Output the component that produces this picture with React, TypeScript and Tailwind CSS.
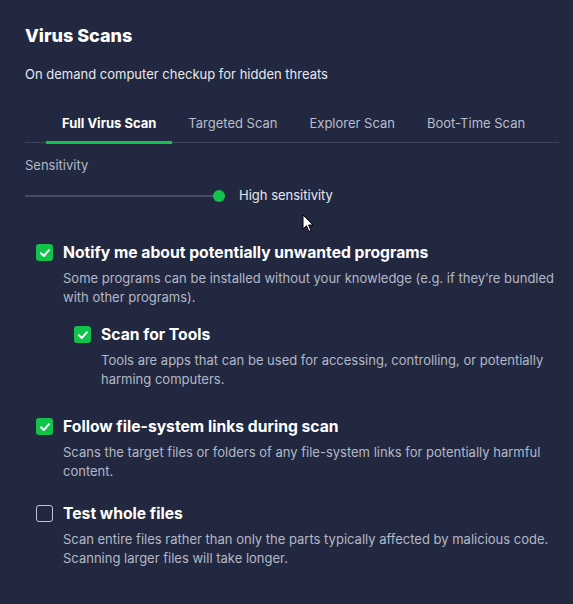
import React from "react";

const Check = ({ checked }: { checked: boolean }) =>
  checked ? (
    <div className="w-[17px] h-[17px] rounded-[3px] bg-[#12c24b] flex items-center justify-center shrink-0">
      <svg width="12" height="12" viewBox="0 0 12 12" fill="none">
        <path d="M2 6.2 L4.8 9 L10 3.2" stroke="white" strokeWidth="2" strokeLinecap="round" strokeLinejoin="round" />
      </svg>
    </div>
  ) : (
    <div className="w-[17px] h-[17px] rounded-[3px] border-[1.5px] border-[#c3c6d1] shrink-0" />
  );

const Option = ({
  checked,
  title,
  desc,
  className = "",
}: {
  checked: boolean;
  title: string;
  desc: React.ReactNode;
  className?: string;
}) => (
  <div className={"flex gap-[10px] " + className}>
    <div className="pt-[1px]">
      <Check checked={checked} />
    </div>
    <div className="flex flex-col">
      <div className="text-[15.7px] font-bold text-white leading-[19px]">{title}</div>
      <div className="text-[13px] text-[#b4b8c6] leading-[19px] mt-[7px]">{desc}</div>
    </div>
  </div>
);

export default function App() {
  return (
    <div
      className="relative w-[573px] h-[604px] bg-[#222840] overflow-hidden"
      style={{ fontFamily: "Inter, 'Noto Sans', sans-serif" }}
    >
      <div className="px-[25px] pt-[24px]">
        <h1 className="text-[18px] font-extrabold text-white leading-[24px]">Virus Scans</h1>
        <p className="text-[13px] text-[#e6e8ee] mt-[17px] leading-[18px]">
          On demand computer checkup for hidden threats
        </p>
        <div className="mt-[31px] border-b border-[#3f4559] flex pl-[21px] w-[534px]">
          <div className="px-4 pb-[9px] text-[13px] font-bold text-white border-b-[3px] border-[#12c24b] -mb-[2px] leading-[18px]">
            Full Virus Scan
          </div>
          <div className="px-4 pb-[9px] text-[13px] text-[#b9bdcb] leading-[18px]">Targeted Scan</div>
          <div className="px-4 pb-[9px] text-[13px] text-[#b9bdcb] leading-[18px]">Explorer Scan</div>
          <div className="px-4 pb-[9px] text-[13px] text-[#b9bdcb] leading-[18px]">Boot-Time Scan</div>
        </div>
        <div className="mt-[13px] text-[13px] text-[#b4b8c6] leading-[18px]">Sensitivity</div>
        <div className="flex items-center mt-[15px] h-[14px]">
          <div className="relative w-[200px] h-[2px] bg-[#474d60]">
            <div className="absolute right-0 top-1/2 -translate-y-1/2 w-[12px] h-[12px] rounded-full bg-[#12c24b]" />
          </div>
          <span className="ml-[14px] text-[13px] text-[#e6e8ee]">High sensitivity</span>
        </div>
      </div>
      <div className="pl-[36px] pt-[40px] pr-[10px] flex flex-col">
        <Option
          checked
          title="Notify me about potentially unwanted programs"
          desc={
            <>
              Some programs can be installed without your knowledge (e.g. if they’re bundled
              <br />
              with other programs).
            </>
          }
        />
        <Option
          className="ml-[38px] mt-[18px]"
          checked
          title="Scan for Tools"
          desc={
            <>
              Tools are apps that can be used for accessing, controlling, or potentially
              <br />
              harming computers.
            </>
          }
        />
        <Option
          className="mt-[28px]"
          checked
          title="Follow file-system links during scan"
          desc={
            <>
              Scans the target files or folders of any file-system links for potentially harmful
              <br />
              content.
            </>
          }
        />
        <Option
          className="mt-[23px]"
          checked={false}
          title="Test whole files"
          desc={
            <>
              Scan entire files rather than only the parts typically affected by malicious code.
              <br />
              Scanning larger files will take longer.
            </>
          }
        />
      </div>
      <svg className="absolute left-[302px] top-[214px]" width="12" height="19" viewBox="0 0 12 19">
        <path d="M1 1 L1 15 L4.5 11.8 L7 17.5 L9 16.6 L6.6 11 L11 11 Z" fill="white" stroke="black" strokeWidth="1" strokeLinejoin="round" />
      </svg>
    </div>
  );
}
